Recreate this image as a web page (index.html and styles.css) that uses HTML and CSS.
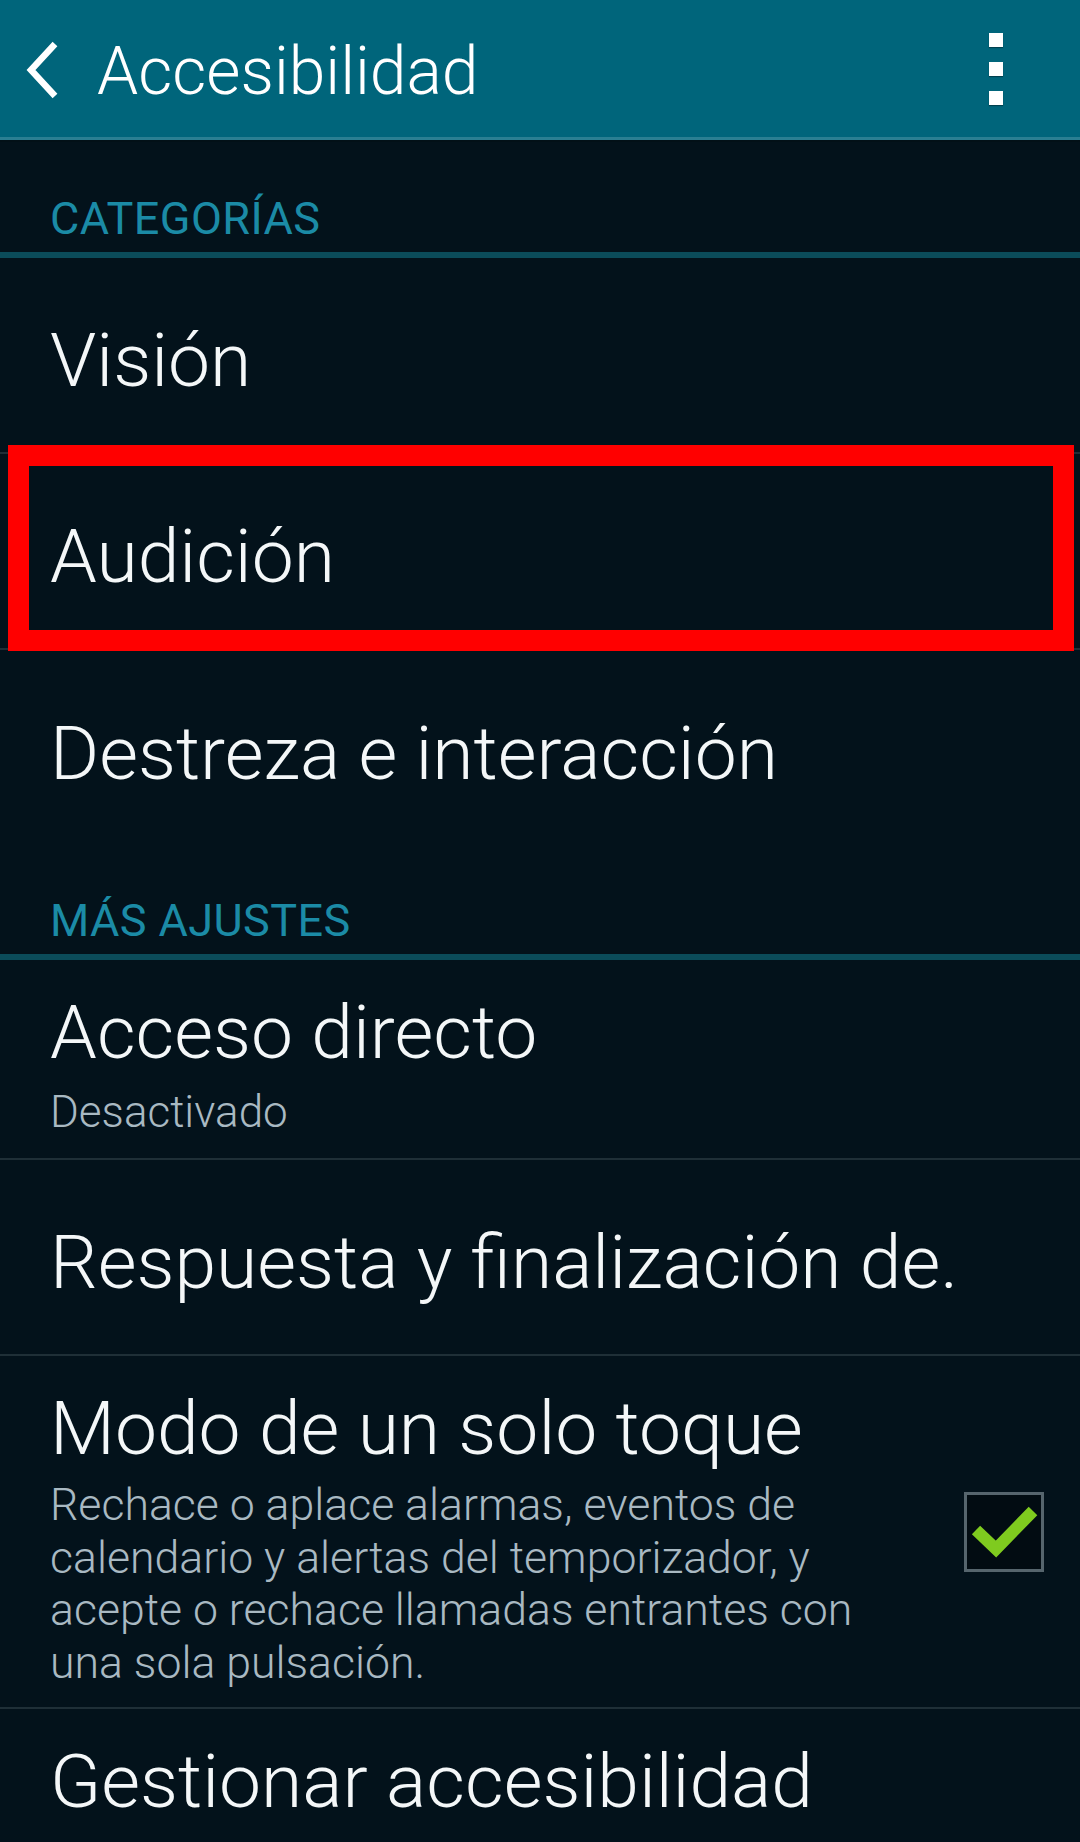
FILE: index.html
```html
<!DOCTYPE html>
<html lang="es">
<head>
<meta charset="utf-8">
<title>Accesibilidad</title>
<link rel="stylesheet" href="styles.css">
</head>
<body>
<div class="screen">
  <header class="appbar">
    <div class="appbar-left">
      <svg class="back" width="40" height="60" viewBox="0 0 40 60" aria-hidden="true">
        <path d="M30 3 L6 29 L30 55" fill="none" stroke="#ffffff" stroke-width="6.5" stroke-linecap="butt" stroke-linejoin="miter"/>
      </svg>
      <h1 class="title">Accesibilidad</h1>
    </div>
    <div class="overflow">
      <span class="dot"></span>
      <span class="dot"></span>
      <span class="dot"></span>
    </div>
  </header>

  <div class="section">CATEGORÍAS</div>
  <div class="row single">Visión</div>
  <div class="row single highlighted"><span>Audición</span></div>
  <div class="row single last">Destreza e interacción</div>

  <div class="section">MÁS AJUSTES</div>
  <div class="row double">
    <div class="row-title">Acceso directo</div>
    <div class="row-sub">Desactivado</div>
  </div>
  <div class="row single">Respuesta y finalización de.</div>
  <div class="row double check-row">
    <div class="row-text">
      <div class="row-title">Modo de un solo toque</div>
      <div class="row-desc">Rechace o aplace alarmas, eventos de<br>calendario y alertas del temporizador, y<br>acepte o rechace llamadas entrantes con<br>una sola pulsación.</div>
    </div>
    <div class="checkbox">
      <svg width="74" height="74" viewBox="0 0 74 74" aria-hidden="true">
        <path d="M9 35 L29 54 L66 16" fill="none" stroke="#7fcb1f" stroke-width="12" stroke-linecap="butt" stroke-linejoin="miter"/>
      </svg>
    </div>
  </div>
  <div class="row double last">
    <div class="row-title">Gestionar accesibilidad</div>
  </div>
</div>
</body>
</html>
```

FILE: styles.css
```css
* {
  box-sizing: border-box;
  margin: 0;
  padding: 0;
}

html, body {
  width: 1080px;
  height: 1842px;
  overflow: hidden;
  background: #03121b;
}

body {
  font-family: Roboto, "Noto Sans", "Liberation Sans", sans-serif;
  color: #f4f7f8;
}

.screen {
  width: 1080px;
  height: 1842px;
  overflow: hidden;
  display: flex;
  flex-direction: column;
}

.appbar {
  height: 140px;
  flex: none;
  background: #00657b;
  border-bottom: 3px solid #2a7f92;
  box-shadow: 0 2px 0 #021017;
  margin-bottom: 4px;
  display: flex;
  align-items: center;
  justify-content: space-between;
}

.appbar-left {
  display: flex;
  align-items: center;
  padding-left: 25px;
  gap: 32px;
}

.back {
  display: block;
  margin-top: 4px;
}

.title {
  font-weight: 300;
  font-size: 66px;
  line-height: 1;
  color: #ffffff;
  margin-top: 6px;
}

.overflow {
  display: flex;
  flex-direction: column;
  gap: 15px;
  padding-right: 77px;
}

.dot {
  display: block;
  width: 14px;
  height: 14px;
  background: #ffffff;
  box-shadow: 0 1px 1px rgba(0, 0, 0, 0.35);
}

.section {
  height: 114px;
  flex: none;
  padding: 54px 0 0 50px;
  font-size: 45px;
  line-height: 41px;
  letter-spacing: 0.4px;
  font-weight: 400;
  color: #1b8ba6;
  border-bottom: 6px solid #0b4c5a;
}

.row {
  flex: none;
  padding-left: 50px;
  border-bottom: 2px solid #1f2f37;
  font-weight: 300;
  font-size: 75px;
  color: #f4f7f8;
}

.row.last {
  border-bottom: none;
}

.row.single {
  height: 196px;
  display: flex;
  align-items: center;
  line-height: 88px;
  padding-top: 10px;
}

.row.highlighted {
  position: relative;
}

.row.highlighted::after {
  content: "";
  position: absolute;
  left: 8px;
  right: 6px;
  top: -9px;
  bottom: -3px;
  border: 21px solid #ff0000;
  pointer-events: none;
}

.row.double {
  padding-top: 28px;
  padding-bottom: 17px;
}

.row-title {
  font-size: 75px;
  line-height: 88px;
  font-weight: 300;
}

.row-sub {
  margin-top: 7px;
  font-size: 44px;
  line-height: 58px;
  font-weight: 300;
  color: #a9b9c2;
}

.check-row {
  display: flex;
  align-items: flex-start;
  justify-content: space-between;
  padding-right: 36px;
  padding-bottom: 23px;
}

.row-desc {
  margin-top: 7px;
  font-size: 44.6px;
  line-height: 52.7px;
  font-weight: 300;
  color: #a9b9c2;
}

.checkbox {
  width: 80px;
  height: 80px;
  flex: none;
  margin-top: 108px;
  border: 3px solid #56656d;
  background: #020c12;
  display: flex;
  align-items: center;
  justify-content: center;
}

.checkbox svg {
  display: block;
}
```
